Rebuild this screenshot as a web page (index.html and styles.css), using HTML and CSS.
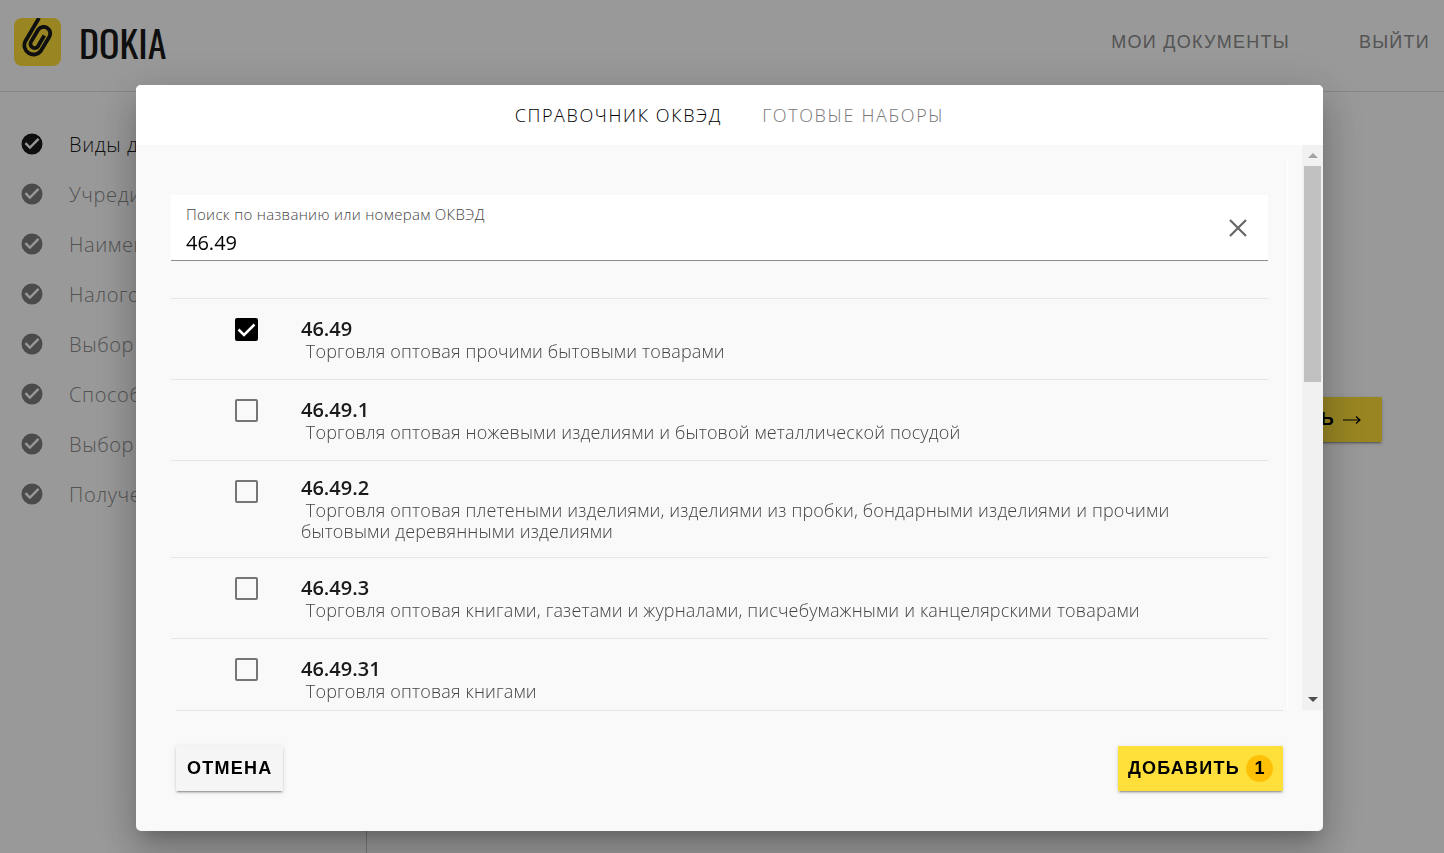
FILE: index.html
```html
<!DOCTYPE html>
<html lang="ru">
<head>
<meta charset="utf-8">
<title>Dokia</title>
<link rel="stylesheet" href="styles.css">
</head>
<body>
<svg class="sprite" aria-hidden="true">
  <symbol id="done" viewBox="0 0 24 24"><path fill="currentColor" d="M12 1.500a10.500 10.500 0 1 0 0 21 10.500 10.500 0 0 0 0-21zm-2.100 15.800-5.300-5.300 1.700-1.700 3.600 3.600 7.800-7.800 1.700 1.700z"/></symbol>
</svg>
<div class="page">
  <header class="topbar">
    <a class="brand" href="#">
      <svg class="brand-mark" viewBox="0 0 47 48" aria-hidden="true">
        <rect width="47" height="48" rx="8" fill="#ffe03a"/>
        <path d="M25 0 11.200 23.500A9.200 9.200 0 0 0 26.800 33L35.200 19A6.600 6.600 0 0 0 24 12L17.200 23.500A4 4 0 0 0 24 28.300L30.300 17.500" fill="none" stroke="#1a1a1a" stroke-width="3.800"/>
      </svg>
      <span class="brand-name">DOKIA</span>
    </a>
    <nav class="topnav">
      <a href="#">МОИ ДОКУМЕНТЫ</a>
      <a href="#">ВЫЙТИ</a>
    </nav>
  </header>
  <div class="body">
    <nav class="steps">
      <a class="step active" href="#"><svg><use href="#done"/></svg>Виды деятельности</a>
      <a class="step" href="#"><svg><use href="#done"/></svg>Учредители</a>
      <a class="step" href="#"><svg><use href="#done"/></svg>Наименование</a>
      <a class="step" href="#"><svg><use href="#done"/></svg>Налогообложение</a>
      <a class="step" href="#"><svg><use href="#done"/></svg>Выбор банка</a>
      <a class="step" href="#"><svg><use href="#done"/></svg>Способ подачи</a>
      <a class="step" href="#"><svg><use href="#done"/></svg>Выбор подписи</a>
      <a class="step" href="#"><svg><use href="#done"/></svg>Получение</a>
    </nav>
    <main class="content">
      <button class="btn primary" type="button">ПРОДОЛЖИТЬ <svg class="arrow" viewBox="0 0 18 12" aria-hidden="true"><path d="M0 6H16.500M13 2.500 17 6 13 9.500" fill="none" stroke="currentColor" stroke-width="1.200"/></svg></button>
    </main>
  </div>
</div>

<div class="overlay">
  <section class="dialog" role="dialog" aria-modal="true" aria-label="Справочник ОКВЭД">
    <div class="tabs" role="tablist">
      <button class="tab selected" type="button" role="tab" aria-selected="true">СПРАВОЧНИК ОКВЭД</button>
      <button class="tab" type="button" role="tab" aria-selected="false">ГОТОВЫЕ НАБОРЫ</button>
    </div>
    <div class="viewport">
      <div class="panel">
        <div class="search">
          <div class="field">
            <label for="query">Поиск по названию или номерам ОКВЭД</label>
            <input id="query" type="text" value="46.49">
          </div>
          <button class="clear" type="button" aria-label="Очистить"><svg viewBox="0 0 18 18"><path d="M1 1 17 17M17 1 1 17" fill="none" stroke="currentColor" stroke-width="2.200"/></svg></button>
        </div>
        <ul class="list">
          <li><label class="row"><input type="checkbox" checked><span class="text"><b>46.49</b><span class="desc">&nbsp;Торговля оптовая прочими бытовыми товарами</span></span></label></li>
          <li><label class="row"><input type="checkbox"><span class="text"><b>46.49.1</b><span class="desc">&nbsp;Торговля оптовая ножевыми изделиями и бытовой металлической посудой</span></span></label></li>
          <li><label class="row"><input type="checkbox"><span class="text"><b>46.49.2</b><span class="desc">&nbsp;Торговля оптовая плетеными изделиями, изделиями из пробки, бондарными изделиями и прочими бытовыми деревянными изделиями</span></span></label></li>
          <li><label class="row"><input type="checkbox"><span class="text"><b>46.49.3</b><span class="desc">&nbsp;Торговля оптовая книгами, газетами и журналами, писчебумажными и канцелярскими товарами</span></span></label></li>
          <li><label class="row"><input type="checkbox"><span class="text"><b>46.49.31</b><span class="desc">&nbsp;Торговля оптовая книгами</span></span></label></li>
        </ul>
      </div>
      <div class="scrollbar" aria-hidden="true">
        <span class="cap up"></span>
        <span class="track"><span class="thumb"></span></span>
        <span class="cap down"></span>
      </div>
    </div>
    <footer class="actions">
      <button class="btn plain" type="button">ОТМЕНА</button>
      <button class="btn primary" type="button">ДОБАВИТЬ<span class="count">1</span></button>
    </footer>
  </section>
</div>
</body>
</html>
```
FILE: styles.css
```css
* { box-sizing: border-box; }
body {
  margin: 0;
  font-family: "Open Sans", "Noto Sans", sans-serif;
  color: #1a1a1a;
  background: #fff;
  overflow: hidden;
}
a { color: inherit; text-decoration: none; }
button { border: 0; background: none; padding: 0; font: inherit; color: inherit; cursor: pointer; }
.sprite { display: none; }

.page { display: flex; flex-direction: column; min-height: 100vh; }
.topbar {
  display: flex;
  align-items: center;
  justify-content: space-between;
  height: 92px;
  padding: 0 14px 8px;
  border-bottom: 1px solid #e0e0e0;
}
.brand { display: flex; align-items: center; gap: 18px; }
.brand-mark { width: 47px; height: 48px; }
.brand-name {
  font-family: Oswald, "Liberation Sans Narrow", "Open Sans Condensed", "Roboto Condensed", "Liberation Sans", sans-serif;
  font-size: 38px;
  line-height: 48px;
}
.topnav {
  display: flex;
  gap: 69px;
  padding-top: 2px;
  font-family: "Liberation Sans", Arial, sans-serif;
  font-size: 18px;
  letter-spacing: .07em;
  color: #8c8c8c;
}
.body { display: flex; flex: 1; }
.steps { width: 367px; padding-top: 27px; border-right: 1px solid #c8c8c8; }
.step {
  display: flex;
  align-items: center;
  gap: 25px;
  height: 50px;
  padding-left: 20px;
  font-size: 20px;
  font-weight: 300;
  letter-spacing: .03em;
  color: #8a8a8a;
  white-space: nowrap;
}
.step svg { width: 24px; height: 24px; color: #7e7e7e; }
.step.active, .step.active svg { color: #1a1a1a; }
.content { flex: 1; display: flex; justify-content: flex-end; align-items: flex-start; padding: 305px 62px 0 0; }

.btn {
  display: inline-flex;
  align-items: center;
  gap: 6px;
  height: 45px;
  border-radius: 1px;
  font-family: "Liberation Sans", Arial, sans-serif;
  font-size: 18px;
  font-weight: 700;
  letter-spacing: .07em;
  color: #000;
  box-shadow: 0 3px 1px -2px rgba(0, 0, 0, .2), 0 2px 2px rgba(0, 0, 0, .14), 0 1px 5px rgba(0, 0, 0, .12);
}
.btn.primary { padding: 0 10px; background: #ffe03a; }
.btn.plain { padding: 0 10px 0 11px; background: #f5f5f5; }
.content .btn.primary { gap: 8px; padding: 0 21px; }
.arrow { width: 18px; height: 12px; }
.count {
  width: 27px;
  height: 27px;
  border-radius: 50%;
  background: #ffc107;
  line-height: 27px;
  letter-spacing: 0;
  text-align: center;
}

.overlay {
  position: fixed;
  inset: 0;
  display: flex;
  padding: 85px 121px 22px 136px;
  background: rgba(0, 0, 0, .4);
}
.dialog {
  flex: 1;
  min-width: 0;
  display: flex;
  flex-direction: column;
  overflow: hidden;
  border-radius: 5px;
  background: #f9f9f9;
  box-shadow: 0 11px 15px -7px rgba(0, 0, 0, .2), 0 24px 38px 3px rgba(0, 0, 0, .14), 0 9px 46px 8px rgba(0, 0, 0, .12);
}
.tabs { display: flex; justify-content: center; gap: 40px; height: 60px; background: #fff; }
.tab { font-size: 18px; font-weight: 300; letter-spacing: .09em; color: #777; }
.tab.selected { color: #000; }

.viewport { flex: 1; min-height: 0; display: flex; }
.panel {
  flex: 1;
  min-width: 0;
  margin: 15px 14px 0 15px;
  padding: 35px 19px 0 20px;
  border-right: 1px solid #fff;
  overflow: hidden;
}
.search {
  display: flex;
  align-items: center;
  justify-content: space-between;
  height: 66px;
  padding: 0 21px 0 15px;
  border-bottom: 1px solid #8c8c8c;
  background: #fff;
}
.field { flex: 1; display: flex; flex-direction: column; padding-top: 6px; }
.field label { font-size: 15px; line-height: 24px; font-weight: 300; letter-spacing: .02em; color: #444; }
.field input {
  width: 100%;
  height: 34px;
  padding: 0;
  border: 0;
  outline: 0;
  background: none;
  font: 400 20px/34px "Open Sans", "Noto Sans", sans-serif;
  color: #000;
}
.clear { width: 18px; height: 18px; color: #666; }
.clear svg { display: block; width: 18px; height: 18px; }

.list { margin: 37px 0 0; padding: 0; list-style: none; }
.list li { border-top: 1px solid #e6e6e6; }
.row { display: flex; gap: 43px; min-height: 80px; padding: 14px 64px 15px 64px; }
.row input {
  appearance: none;
  flex: none;
  width: 23px;
  height: 23px;
  margin: 5px 0 0;
  border: 2px solid #757575;
  border-radius: 2px;
}
.row input:checked {
  border-color: #000;
  background: #000 url("data:image/svg+xml,%3Csvg xmlns='http://www.w3.org/2000/svg' viewBox='0 0 19 19'%3E%3Cpath d='M1.500 9.500 7 15 17.500 4.500' fill='none' stroke='white' stroke-width='2.500'/%3E%3C/svg%3E") center / 19px 19px no-repeat;
}
.text { align-self: center; display: flex; flex-direction: column; }
.text b { font-size: 20px; font-weight: 600; line-height: 25px; }
.desc { font-size: 18px; font-weight: 300; line-height: 21px; letter-spacing: .009em; color: #444; }

.scrollbar { flex: none; width: 21px; display: flex; flex-direction: column; background: #f1f1f1; }
.cap { height: 21px; display: grid; place-items: center; }
.cap::before { content: ""; border: 5px solid transparent; }
.cap.up::before { border-top-width: 0; border-bottom-color: #a3a3a3; }
.cap.down::before { border-bottom-width: 0; border-top-color: #505050; }
.track { flex: 1; padding: 0 2px; }
.thumb { display: block; height: 41.300%; background: #c1c1c1; }

.actions {
  display: flex;
  justify-content: space-between;
  margin: 0 40px;
  padding: 35px 0 40px;
  border-top: 1px solid #e6e6e6;
}
```
